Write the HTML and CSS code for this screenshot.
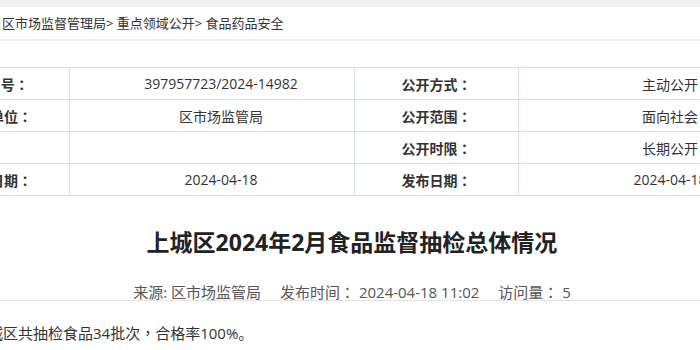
FILE: index.html
```html
<!DOCTYPE html>
<html lang="zh-CN">
<head>
<meta charset="utf-8">
<title>上城区2024年2月食品监督抽检总体情况</title>
<link rel="stylesheet" href="styles.css">
</head>
<body>
<div class="topbar"></div>
<div class="crumb">区市场监督管理局&gt; 重点领域公开&gt; 食品药品安全</div>
<div class="main">
  <table class="info">
    <tr>
      <td class="label first">索 引 号<span class="colon" lang="zh-TW">：</span></td>
      <td class="value">397957723/2024-14982</td>
      <td class="label">公开方式<span class="colon" lang="zh-TW">：</span></td>
      <td class="value">主动公开</td>
    </tr>
    <tr>
      <td class="label first">发布单位<span class="colon" lang="zh-TW">：</span></td>
      <td class="value">区市场监管局</td>
      <td class="label">公开范围<span class="colon" lang="zh-TW">：</span></td>
      <td class="value">面向社会</td>
    </tr>
    <tr>
      <td class="label first short">文号<span class="colon" lang="zh-TW">：</span></td>
      <td class="value"></td>
      <td class="label">公开时限<span class="colon" lang="zh-TW">：</span></td>
      <td class="value">长期公开</td>
    </tr>
    <tr>
      <td class="label first">成文日期<span class="colon" lang="zh-TW">：</span></td>
      <td class="value">2024-04-18</td>
      <td class="label">发布日期<span class="colon" lang="zh-TW">：</span></td>
      <td class="value">2024-04-18</td>
    </tr>
  </table>
  <h1 class="title">上城区2024年2月食品监督抽检总体情况</h1>
  <div class="meta">
    <span class="item">来源: 区市场监管局</span>
    <span class="item">发布时间<span class="colon" lang="zh-TW">：</span> 2024-04-18 11:02</span>
    <span class="item">访问量<span class="colon" lang="zh-TW">：</span> 5</span>
  </div>
  <p class="body-text">上城区共抽检食品34批次<span class="colon" lang="zh-TW">，</span>合格率100%。</p>
</div>
</body>
</html>
```

FILE: styles.css
```css
html, body {
  margin: 0;
  padding: 0;
  background: #fff;
  overflow: hidden;
}
body {
  font-family: "Open Sans", "Noto Sans CJK SC", sans-serif;
  color: #333;
}
.colon {
  font-family: "Noto Sans CJK TC", "Noto Sans CJK SC", sans-serif;
}
.topbar {
  height: 7px;
  background: #f1f1f1;
}
.crumb {
  height: 32px;
  line-height: 32px;
  font-size: 13px;
  padding-left: 2px;
  color: #333;
  border-bottom: 2px solid #eeeeee;
  white-space: nowrap;
}
.main {
  margin-left: -95px;
  width: 894px;
  padding-top: 26px;
}
.info {
  width: 894px;
  border-collapse: collapse;
  table-layout: fixed;
  font-size: 14px;
}
.info td {
  height: 31px;
  padding: 0;
  border: 1px solid #d2def2;
  text-align: center;
  white-space: nowrap;
  overflow: hidden;
}
.info td.label {
  width: 163px;
  font-weight: bold;
  color: #333;
}
.info td.label.first {
  width: 144px;
  padding-left: 19px;
}
.info td.label.first.short {
  padding-left: 1px;
  padding-right: 18px;
}
.info td.value {
  width: 266px;
  padding-left: 18px;
  color: #333;
}
.title {
  margin: 30px 0 0;
  font-size: 23px;
  line-height: 32px;
  font-weight: bold;
  color: #222;
  text-align: center;
}
.meta {
  display: flex;
  justify-content: center;
  gap: 19px;
  margin-top: 26px;
  line-height: 16px;
  font-size: 15px;
  color: #555;
  border-bottom: 1px solid #e3e3e3;
  white-space: nowrap;
}
.body-text {
  margin: 20px 0 0;
  padding-left: 68px;
  font-size: 15px;
  line-height: 24px;
  color: #333;
}
```
